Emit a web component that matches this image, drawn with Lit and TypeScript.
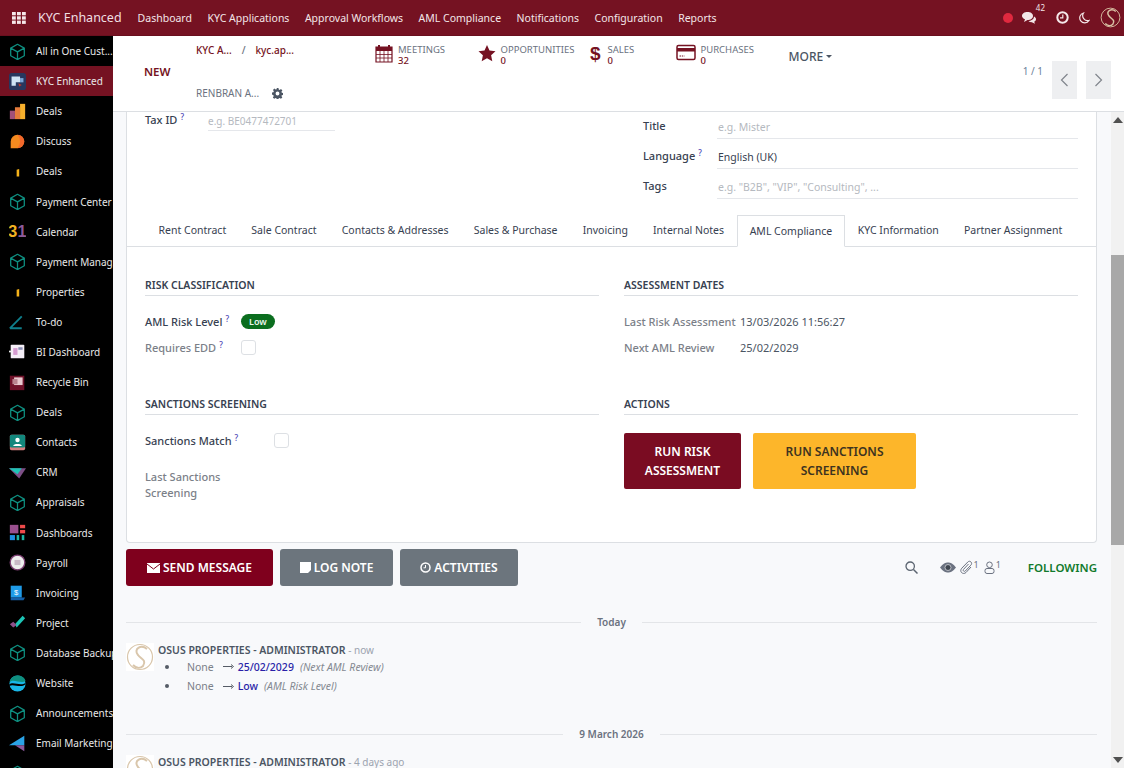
import { LitElement, html, css, svg } from "lit";
import { customElement } from "lit/decorators.js";

const cube = svg`<path d="M10 1.5 18 6v9l-8 4.5L2 15V6z M2 6l8 4.5L18 6 M10 10.5v9" fill="none" stroke="#0e8f80" stroke-width="1.5" stroke-linejoin="round"/>`;

const sideIcons: Record<string, unknown> = {
  cube,
  kyc: svg`<rect x="0" y="0" width="20" height="20" rx="3" fill="#27375e"/><path d="M3 4h10v7h-5v4H3z" fill="#cfe3f4"/><path d="M13 6h4v5h-4z" fill="#7aa7d8"/><path d="M11 12l4 2-3 2z" fill="#c0392b"/>`,
  deals: svg`<rect x="1" y="9" width="6" height="10" fill="#a24f7a"/><rect x="7" y="5" width="6" height="14" fill="#e57b3b"/><rect x="13" y="1" width="6" height="18" fill="#f7b02c"/>`,
  discuss: svg`<path d="M10 2a8 8 0 1 1 0 16H2v-8a8 8 0 0 1 8-8z" fill="#f58a1f"/><path d="M10 2a8 8 0 0 1 8 8 8 8 0 0 1-8 8 12 12 0 0 0 0-16z" fill="#f15a30" opacity=".7"/>`,
  pin: svg`<path d="M9 8l3-1v9H9z" fill="#f5b21a"/>`,
  cal: svg`<text x="-1" y="17" font-family="Liberation Sans, sans-serif" font-size="19" font-weight="700" fill="#f0b323">3</text><text x="10" y="17" font-family="Liberation Sans, sans-serif" font-size="19" font-weight="700" fill="#8e5a9a">1</text>`,
  todo: svg`<path d="M1 18 15 4M1 18h14" fill="none" stroke="#0f7f8c" stroke-width="2.2"/>`,
  bi: svg`<rect x="2" y="2" width="16" height="16" rx="1" fill="#f4eef6"/><rect x="5" y="6" width="5" height="8" fill="#d59bd0"/><rect x="11" y="5" width="5" height="3" fill="#8a8fb5"/><rect x="0" y="9" width="3" height="2" fill="#eee"/>`,
  bin: svg`<rect x="1" y="2" width="17" height="17" fill="#6f1129"/><rect x="6" y="4" width="10" height="9" fill="#e9c9cf"/><rect x="4" y="6" width="6" height="6" fill="#b9838f"/>`,
  contacts: svg`<rect x="1" y="1" width="18" height="18" rx="2" fill="#d47f7f"/><rect x="1" y="1" width="18" height="15" rx="2" fill="#12877c"/><circle cx="10" cy="7" r="2.6" fill="#fff"/><path d="M5 14c0-3 10-3 10 0z" fill="#fff"/>`,
  crm: svg`<path d="M0 5h20l-8 12z" fill="#7d4f86"/><path d="M0 5h15l-5 7z" fill="#1cc4b5"/>`,
  dash: svg`<rect x="1" y="1" width="10" height="10" fill="#99508e"/><rect x="13" y="1" width="6" height="4" fill="#ee4a4a"/><rect x="13" y="7" width="6" height="4" fill="#ee4a4a"/><rect x="1" y="13" width="6" height="6" fill="#1e8fe0"/><rect x="9" y="13" width="3" height="6" fill="#1cb5a3"/><rect x="15" y="13" width="3" height="6" fill="#1cb5a3"/>`,
  payroll: svg`<circle cx="10" cy="10" r="8.6" fill="#eee" stroke="#7c3f72" stroke-width="1.6"/><rect x="6.5" y="7" width="7" height="6" fill="#c9b9c6"/>`,
  inv: svg`<path d="M2 2h13v14H2z" fill="#1f9be8"/><path d="M2 16h17l-2 3H2z" fill="#155fa8"/><text x="6" y="13" font-family="Liberation Sans, sans-serif" font-size="9" fill="#fff">$</text>`,
  proj: svg`<path d="M7 12l9-10 3 3-10 11z" fill="#1cc4b5"/><path d="M1 12l4-3 4 4-4 3z" fill="#8e4f8a"/>`,
  web: svg`<circle cx="10" cy="10" r="9.5" fill="#19b7e8"/><path d="M.5 9C4 3 14 11 19.5 7 18 2 14 .5 10 .5 5 .5 1.500 4 .5 9z" fill="#0f8f7f"/><path d="M.5 11C5 7 14 14 19.500 9v2C14 16 5 10 .5 13z" fill="#000"/>`,
  mail: svg`<path d="M0 12 18 1v11z" fill="#2aa3e6"/><path d="M7 12h11v7z" fill="#8a5a9a"/>`,
};

const apps = [
  ["All in One Cust...", "cube"],
  ["KYC Enhanced", "kyc"],
  ["Deals", "deals"],
  ["Discuss", "discuss"],
  ["Deals", "pin"],
  ["Payment Center", "cube"],
  ["Calendar", "cal"],
  ["Payment Manag...", "cube"],
  ["Properties", "pin"],
  ["To-do", "todo"],
  ["BI Dashboard", "bi"],
  ["Recycle Bin", "bin"],
  ["Deals", "cube"],
  ["Contacts", "contacts"],
  ["CRM", "crm"],
  ["Appraisals", "cube"],
  ["Dashboards", "dash"],
  ["Payroll", "payroll"],
  ["Invoicing", "inv"],
  ["Project", "proj"],
  ["Database Backup", "cube"],
  ["Website", "web"],
  ["Announcements", "cube"],
  ["Email Marketing", "mail"],
  ["Employees", "cube"],
];

const menu = ["Dashboard", "KYC Applications", "Approval Workflows", "AML Compliance", "Notifications", "Configuration", "Reports"];
const tabs = ["Rent Contract", "Sale Contract", "Contacts & Addresses", "Sales & Purchase", "Invoicing", "Internal Notes", "AML Compliance", "KYC Information", "Partner Assignment"];

const logo = (size: number, bg: string, fg: string) => html`<svg width=${size} height=${size} viewBox="0 0 28 28">
  <rect width="28" height="28" fill=${bg} rx=${bg === "#fff" ? 0 : 14} />
  <circle cx="14" cy="14" r="12.5" fill="none" stroke=${fg} stroke-width="1.2" />
  <path d="M21 6C15 1 7 6 12 12c3 4 9 5 5 11-3 3-7 2-10-1" fill="none" stroke=${fg} stroke-width="2" />
</svg>`;

@customElement("app-root")
export class AppRoot extends LitElement {
  static styles = css`
    :host {
      display: block;
      width: 1124px;
      height: 768px;
      overflow: hidden;
      font-family: "Noto Sans", "Open Sans", sans-serif;
      font-size: 11px;
      color: #374151;
    }
    .top {
      height: 36px;
      background: #751222;
      color: #f3e6e8;
      display: flex;
      align-items: center;
      box-sizing: border-box;
      border-bottom: 1px solid #6a0f1e;
    }
    .apps {
      margin: 0 12px 0 12px;
      display: flex;
    }
    .brand {
      font-size: 12.5px;
      margin-right: 16px;
      color: #f0dfe2;
    }
    .menu {
      display: flex;
      gap: 15.5px;
      font-size: 10.5px;
      flex: 1;
    }
    .sys {
      display: flex;
      align-items: center;
      margin-right: 3px;
    }
    .dot {
      width: 10px;
      height: 10px;
      border-radius: 50%;
      background: #e0293f;
      margin-right: 9px;
    }
    .count {
      font-size: 8px;
      align-self: flex-start;
      margin: -5px 11px 0 0;
    }
    .body {
      display: flex;
      height: 732px;
    }
    .side {
      width: 113px;
      flex: none;
      background: #000;
      color: #e8e8e8;
      font-size: 10px;
      overflow: hidden;
    }
    .app {
      height: 30.1px;
      display: flex;
      align-items: center;
      gap: 10px;
      padding-left: 9px;
      white-space: nowrap;
      box-sizing: border-box;
    }
    .app.on {
      background: #751222;
    }
    .app svg {
      flex: none;
    }
    .main {
      flex: 1;
      min-width: 0;
      display: flex;
      flex-direction: column;
      background: #f8f9fb;
    }
    .cp {
      height: 76px;
      flex: none;
      box-sizing: border-box;
      background: #fff;
      border-bottom: 1px solid #dcdfe3;
      display: flex;
    }
    .new {
      margin: 28px 0 0 31px;
      width: 52px;
      font-size: 11.5px;
      font-weight: 600;
      color: #751222;
    }
    .crumbs {
      width: 179px;
      flex: none;
      display: flex;
      flex-direction: column;
      justify-content: space-between;
      padding: 7px 0 11px;
      box-sizing: border-box;
      font-size: 10px;
    }
    .crumb-top {
      color: #751222;
      font-weight: 500;
      display: flex;
      gap: 10px;
    }
    .crumb-sep {
      color: #6b7280;
    }
    .crumb-rec {
      color: #6b7280;
      display: flex;
      align-items: center;
      gap: 13px;
    }
    .stats {
      display: flex;
      align-items: flex-start;
      padding-top: 8px;
      flex: 1;
    }
    .stat {
      display: flex;
      gap: 5px;
      line-height: 11px;
      color: #6b7280;
      font-size: 9.5px;
    }
    .stat b {
      display: block;
      color: #751222;
      font-weight: 500;
    }
    .more {
      font-size: 12px;
      font-weight: 500;
      color: #4b5563;
      margin-top: 4px;
      display: flex;
      align-items: center;
      gap: 3px;
    }
    .caret {
      border: 3px solid transparent;
      border-top-color: #4b5563;
      border-bottom: 0;
    }
    .pager {
      display: flex;
      align-items: flex-start;
      margin: 25px 13px 0 0;
      gap: 9px;
      color: #6b8199;
      font-size: 10px;
      padding-top: 0;
    }
    .pager span {
      margin-top: 3px;
    }
    .pg {
      display: flex;
      gap: 9px;
    }
    .pg div {
      width: 25px;
      height: 38px;
      background: #eeeff1;
      display: flex;
      align-items: center;
      justify-content: center;
    }
    .scroll {
      flex: 1;
      min-height: 0;
      display: flex;
    }
    .content {
      flex: 1;
      min-width: 0;
      overflow: hidden;
      padding: 0 14px 0 13px;
    }
    .bar {
      width: 13px;
      flex: none;
      background: #f1f1f1;
      display: flex;
      flex-direction: column;
      align-items: center;
      justify-content: space-between;
      position: relative;
      padding: 5px 0;
      box-sizing: border-box;
    }
    .thumb {
      position: absolute;
      left: 0;
      width: 13px;
      top: 143px;
      height: 290px;
      background: #a8a8a8;
    }
    .tri {
      border: 5px solid transparent;
      border-bottom: 6px solid #505050;
      border-top: 0;
    }
    .tri.dn {
      border-bottom: 0;
      border-top: 6px solid #505050;
    }
    .sheet {
      background: #fff;
      border: 1px solid #dcdfe3;
      border-top: 0;
      border-radius: 0 0 4px 4px;
      height: 431px;
      box-sizing: border-box;
    }
    .head {
      display: grid;
      grid-template-columns: 498px 1fr;
      height: 100px;
      padding-left: 18px;
    }
    .hl {
      display: flex;
      padding-top: 0;
      height: 18px;
    }
    .hl .lbl {
      font-weight: 500;
      color: #374151;
      width: 63px;
    }
    .ph {
      color: #b5b9c0;
      font-size: 10px;
    }
    .taxin {
      width: 127px;
      border-bottom: 1px solid #e5e7eb;
      height: 17px;
      line-height: 16px;
      margin-top: 1px;
    }
    q,
    sup {
      font-size: 8px;
      color: #4a3fb5;
      quotes: none;
      vertical-align: 4px;
      line-height: 0;
      margin-left: 3px;
    }
    .hr {
      padding-top: 5px;
      padding-right: 18px;
    }
    .hrow {
      display: flex;
      height: 30px;
      box-sizing: border-box;
      align-items: flex-start;
    }
    .hrow .lbl {
      width: 74px;
      font-weight: 500;
      color: #374151;
      padding-top: 1px;
    }
    .hrow .in {
      flex: 1;
      height: 21px;
      line-height: 20px;
      padding-left: 1px;
      border-bottom: 1px solid #e5e7eb;
      font-size: 10.5px;
    }
    .tabs {
      display: flex;
      height: 32px;
      border-bottom: 1px solid #dcdfe3;
      padding-left: 19px;
      box-sizing: border-box;
      margin-top: 3px;
    }
    .tab {
      padding: 0 12.6px;
      line-height: 31px;
      font-size: 10.5px;
      white-space: nowrap;
      color: #374151;
      box-sizing: border-box;
      height: 32px;
    }
    .tab.on {
      background: #fff;
      border: 1px solid #dcdfe3;
      border-bottom-color: #fff;
      line-height: 30px;
      padding: 0 12px;
    }
    .grid {
      display: grid;
      grid-template-columns: 454px 454px;
      column-gap: 25px;
      padding: 31px 18px 0;
    }
    h3 {
      margin: 0;
      font-size: 10.5px;
      font-weight: 600;
      color: #374151;
      line-height: 15px;
      padding-bottom: 1px;
      border-bottom: 1px solid #dcdfe3;
      height: 16px;
    }
    .block {
      height: 119px;
    }
    .f {
      display: flex;
      align-items: center;
      height: 26px;
      font-weight: 500;
      color: #374151;
    }
    .f.mute {
      color: #7b8088;
    }
    .f .lbl {
      width: 96px;
      flex: none;
    }
    .fields {
      padding-top: 12px;
    }
    .badge {
      background: #0b6e1f;
      color: #eaf5ec;
      font-size: 9px;
      font-weight: 600;
      border-radius: 8px;
      height: 15px;
      line-height: 15px;
      padding: 0 8px;
    }
    .cb {
      width: 15px;
      height: 15px;
      border: 1px solid #dde0e4;
      border-radius: 3px;
      box-sizing: border-box;
    }
    .val {
      color: #4b5563;
      font-weight: 400;
    }
    .acts {
      display: flex;
      gap: 12px;
      padding-top: 18px;
    }
    .btn {
      font-size: 12px;
      font-weight: 600;
      text-align: center;
      line-height: 19px;
      height: 56px;
      display: flex;
      align-items: center;
      justify-content: center;
      border-radius: 2px;
      box-sizing: border-box;
    }
    .btn.risk {
      width: 117px;
      background: #7a0c22;
      color: #fff;
    }
    .btn.scr {
      width: 163px;
      background: #fdb62a;
      color: #3d3320;
    }
    .chatbar {
      display: flex;
      align-items: center;
      height: 37px;
      margin-top: 6px;
      gap: 7px;
    }
    .cbtn {
      height: 37px;
      border-radius: 3px;
      display: flex;
      align-items: center;
      justify-content: center;
      gap: 3px;
      font-size: 12px;
      font-weight: 600;
      color: #fff;
      box-sizing: border-box;
      background: #6c757d;
    }
    .cbtn.send {
      width: 147px;
      background: #7f001d;
    }
    .cbtn.log {
      width: 113px;
    }
    .cbtn.act {
      width: 118px;
    }
    .tools {
      margin-left: auto;
      display: flex;
      align-items: center;
      color: #6b7280;
      font-size: 9px;
    }
    .follow {
      font-size: 11.5px;
      font-weight: 600;
      color: #117a2c;
      margin-left: 24px;
    }
    .tools i {
      font-style: normal;
      align-self: flex-start;
      margin: -2px 3px 0 1px;
    }
    .day {
      display: flex;
      align-items: center;
      gap: 16px;
      font-size: 10px;
      font-weight: 600;
      color: #6b7280;
    }
    .day::before,
    .day::after {
      content: "";
      flex: 1;
      height: 1px;
      background: #e3e5e8;
    }
    .msg {
      display: flex;
      gap: 4px;
    }
    .msg .av {
      flex: none;
      width: 28px;
      height: 28px;
      background: #fff;
    }
    .who {
      font-size: 10.5px;
      font-weight: 600;
      color: #4b5563;
      line-height: 14px;
      white-space: nowrap;
    }
    .who small {
      font-weight: 400;
      font-size: 10px;
      color: #9ca3af;
    }
    ul {
      margin: 0;
      padding: 0;
      list-style: none;
    }
    li {
      display: flex;
      align-items: center;
      height: 19.5px;
      font-size: 10.5px;
      color: #7b8088;
    }
    li::before {
      content: "";
      width: 4px;
      height: 4px;
      border-radius: 50%;
      background: #555c66;
      margin: 0 18px 0 7px;
    }
    li .to {
      color: #2a1fa8;
      font-weight: 500;
      margin: 0 6px 0 4px;
    }
    li em {
      color: #858a92;
    }
    .arrow {
      margin-left: 9px;
    }
  `;

  render() {
    return html`
      <div class="top">
        <div class="apps">
          <svg width="14" height="12" viewBox="0 0 14 12" fill="#f6e8ea">
            ${[0, 5, 10].flatMap((x) => [0, 4.3, 8.6].map((y) => svg`<rect x=${x} y=${y} width="3.8" height="3.3" />`))}
          </svg>
        </div>
        <div class="brand">KYC Enhanced</div>
        <div class="menu">${menu.map((m) => html`<span>${m}</span>`)}</div>
        <div class="sys">
          <div class="dot"></div>
          <svg width="14" height="12" viewBox="0 0 14 12" fill="#f3e6e8"><path d="M5.500 0C8.500 0 11 1.500 11 4S8.500 8 5.500 8L2 10l1-2.700C1.200 6.500 0 5.400 0 4 0 1.500 2.500 0 5.500 0z" /><path d="M12 4.500c1.300.7 2 1.500 2 2.700 0 1-.7 2-1.800 2.500l.8 2-3.200-1.500c-1.400 0-2.500-.3-3.300-1C10 8.500 12 7 12 4.500z" /></svg>
          <span class="count">42</span>
          <svg width="13" height="13" viewBox="0 0 13 13" style="margin-right:10px"><circle cx="6.500" cy="6.500" r="5.200" fill="none" stroke="#f6e8ea" stroke-width="2" /><path d="M6.800 3.500v3.300H4" fill="none" stroke="#f6e8ea" stroke-width="1.200" /></svg>
          <svg width="11" height="12" viewBox="0 0 11 12" style="margin-right:10px"><path d="M4.500 1A5 5 0 1 0 10 8.500 5 5 0 0 1 4.500 1z" fill="none" stroke="#f3e6e8" stroke-width="1.200" /></svg>
          ${logo(21, "#751222", "#d9c3a5")}
        </div>
      </div>
      <div class="body">
        <nav class="side">
          ${apps.map(
            ([n, i], idx) => html`<div class="app ${idx === 1 ? "on" : ""}">
              <svg width="17" height="17" viewBox="0 0 20 20">${sideIcons[i]}</svg><span>${n}</span>
            </div>`
          )}
        </nav>
        <div class="main">
          <div class="cp">
            <div class="new">NEW</div>
            <div class="crumbs">
              <div class="crumb-top"><span>KYC A...</span><span class="crumb-sep">/</span><span>kyc.ap...</span></div>
              <div class="crumb-rec">
                <span>RENBRAN A...</span>
                <svg width="11" height="11" viewBox="0 0 16 16" fill="#4b5563"><path d="M9.400 0l.4 2.300 1.300.6 2-1.300 2 2-1.400 1.900.6 1.400 2.300.4v2.800l-2.300.4-.6 1.300 1.300 2-2 2-1.900-1.400-1.400.6-.4 2.300H6.900l-.4-2.300-1.300-.6-2 1.300-2-2 1.400-1.900-.6-1.400L-.200 9.400V6.600l2.300-.4.6-1.300-1.300-2 2-2 1.900 1.400 1.400-.6.400-2.300z M8 5.200a2.800 2.800 0 1 0 0 5.600 2.800 2.800 0 0 0 0-5.600z" fill-rule="evenodd" /></svg>
              </div>
            </div>
            <div class="stats">
              <div class="stat" style="width:102.500px">
                <svg width="18" height="19" viewBox="0 0 18 19"><path d="M1 3h16v15H1z" fill="none" stroke="#751222" stroke-width="1.200" /><path d="M1 3h16v4H1z" fill="#751222" /><path d="M4 1v3M14 1v3" stroke="#751222" stroke-width="2" /><path d="M1 10.500h16M1 14h16M5 7v11M9 7v11M13 7v11" stroke="#751222" stroke-width=".8" /></svg>
                <div>MEETINGS<b>32</b></div>
              </div>
              <div class="stat" style="width:111px">
                <svg width="18" height="18" viewBox="0 0 18 18" fill="#751222"><path d="M9 1l2.500 5.500 6 .7-4.400 4 1.200 6L9 14.200l-5.300 3 1.200-6-4.400-4 6-.7z" /></svg>
                <div>OPPORTUNITIES<b>0</b></div>
              </div>
              <div class="stat" style="width:87px">
                <svg width="14" height="19" viewBox="0 0 14 19"><text x="1" y="16" font-family="Liberation Sans, sans-serif" font-size="19" font-weight="700" fill="#751222">$</text></svg>
                <div>SALES<b>0</b></div>
              </div>
              <div class="stat" style="width:113px">
                <svg width="20" height="17" viewBox="0 0 20 17"><rect x="1" y="1.500" width="18" height="14" rx="1.500" fill="none" stroke="#751222" stroke-width="1.500" /><rect x="1" y="4" width="18" height="3.500" fill="#751222" /><path d="M3.500 12h5" stroke="#751222" stroke-width="1" stroke-dasharray="1.500 .8" /></svg>
                <div>PURCHASES<b>0</b></div>
              </div>
              <div class="more">MORE <span class="caret"></span></div>
            </div>
            <div class="pager">
              <span>1 / 1</span>
              <div class="pg">
                <div><svg width="9" height="14" viewBox="0 0 9 14"><path d="M7.500 1 1.500 7l6 6" fill="none" stroke="#80858c" stroke-width="1.200" /></svg></div>
                <div><svg width="9" height="14" viewBox="0 0 9 14"><path d="M1.500 1l6 6-6 6" fill="none" stroke="#80858c" stroke-width="1.200" /></svg></div>
              </div>
            </div>
          </div>
          <div class="scroll">
            <div class="content">
              <div class="sheet">
                <div class="head">
                  <div class="hl">
                    <div class="lbl">Tax ID<sup>?</sup></div>
                    <div class="ph taxin">e.g. BE0477472701</div>
                  </div>
                  <div class="hr">
                    <div class="hrow"><div class="lbl">Title</div><div class="in ph">e.g. Mister</div></div>
                    <div class="hrow"><div class="lbl">Language<sup>?</sup></div><div class="in">English (UK)</div></div>
                    <div class="hrow"><div class="lbl">Tags</div><div class="in ph">e.g. "B2B", "VIP", "Consulting", ...</div></div>
                  </div>
                </div>
                <div class="tabs">
                  ${tabs.map((t) => html`<div class="tab ${t === "AML Compliance" ? "on" : ""}">${t}</div>`)}
                </div>
                <div class="grid">
                  <div class="block">
                    <h3>RISK CLASSIFICATION</h3>
                    <div class="fields">
                      <div class="f"><div class="lbl">AML Risk Level<sup>?</sup></div><span class="badge">Low</span></div>
                      <div class="f mute"><div class="lbl">Requires EDD<sup>?</sup></div><div class="cb"></div></div>
                    </div>
                  </div>
                  <div class="block">
                    <h3>ASSESSMENT DATES</h3>
                    <div class="fields">
                      <div class="f mute"><div class="lbl" style="width:116px">Last Risk Assessment</div><span class="val">13/03/2026 11:56:27</span></div>
                      <div class="f mute"><div class="lbl" style="width:116px">Next AML Review</div><span class="val">25/02/2029</span></div>
                    </div>
                  </div>
                  <div>
                    <h3>SANCTIONS SCREENING</h3>
                    <div class="fields">
                      <div class="f"><div class="lbl" style="width:129px">Sanctions Match<sup>?</sup></div><div class="cb"></div></div>
                      <div class="f mute" style="height:auto;line-height:16px;margin-top:16px"><div class="lbl">Last Sanctions Screening</div></div>
                    </div>
                  </div>
                  <div>
                    <h3>ACTIONS</h3>
                    <div class="acts">
                      <div class="btn risk">RUN RISK<br />ASSESSMENT</div>
                      <div class="btn scr">RUN SANCTIONS<br />SCREENING</div>
                    </div>
                  </div>
                </div>
              </div>
              <div class="chatbar">
                <div class="cbtn send">
                  <svg width="13" height="10" viewBox="0 0 13 10"><path d="M0 0h13v10H0z" fill="#fff" /><path d="M0 1l6.500 5L13 1" fill="none" stroke="#7f001d" stroke-width="1" /></svg>SEND MESSAGE
                </div>
                <div class="cbtn log">
                  <svg width="11" height="11" viewBox="0 0 11 11"><path d="M0 0h11v8L8 11H0z" fill="#fff" /></svg>LOG NOTE
                </div>
                <div class="cbtn act">
                  <svg width="11" height="11" viewBox="0 0 11 11"><circle cx="5.500" cy="5.500" r="4.500" fill="none" stroke="#fff" stroke-width="1.500" /><path d="M5.500 3v2.800H3.500" fill="none" stroke="#fff" /></svg>ACTIVITIES
                </div>
                <div class="tools">
                  <svg width="13" height="13" viewBox="0 0 13 13" style="margin-right:22px"><circle cx="5.200" cy="5.200" r="4.200" fill="none" stroke="#5b6470" stroke-width="1.300" /><path d="M8.500 8.500 12.500 12.500" stroke="#5b6470" stroke-width="1.500" /></svg>
                  <svg width="16" height="11" viewBox="0 0 16 11" style="margin-right:4px"><path d="M0 5.500C3 1.500 5.500.5 8 .5s5 1 8 5c-3 4-5.500 5-8 5s-5-1-8-5z" fill="#6b7280" /><circle cx="8" cy="5.500" r="3" fill="#3f4650" stroke="#e5e7eb" stroke-width=".7" /></svg>
                  <svg width="13" height="15" viewBox="0 0 13 15"><path d="M11 7 6 12.500c-1.500 1.500-3.500 1-4.500 0s-1-3 .3-4.300L7.800 2c1-1 2.300-1 3.200 0s.8 2.200-.2 3.200L5.300 11c-.6.600-1.300.5-1.800 0s-.4-1.200.2-1.800L8.500 4" fill="none" stroke="#6b7280" stroke-width="1" /></svg>
                  <i>1</i>
                  <svg width="11" height="13" viewBox="0 0 11 13" style="margin-left:2px"><circle cx="5.500" cy="3.800" r="2.800" fill="none" stroke="#6b7280" /><rect x="1" y="7.500" width="9" height="5" rx="2" fill="none" stroke="#6b7280" /></svg>
                  <i>1</i>
                  <span class="follow">FOLLOWING</span>
                </div>
              </div>
              <div class="day" style="margin-top:29px">Today</div>
              <div class="msg" style="margin-top:14px">
                <div class="av">${logo(28, "#fff", "#d9c6ab")}</div>
                <div>
                  <div class="who">OSUS PROPERTIES - ADMINISTRATOR <small>- now</small></div>
                  <ul>
                    <li>None<svg class="arrow" width="11" height="5" viewBox="0 0 11 5"><path d="M0 2.500h9M8 .5l2.500 2-2.500 2" fill="none" stroke="#555c66" /></svg><span class="to">25/02/2029</span><em>(Next AML Review)</em></li>
                    <li>None<svg class="arrow" width="11" height="5" viewBox="0 0 11 5"><path d="M0 2.500h9M8 .5l2.500 2-2.500 2" fill="none" stroke="#555c66" /></svg><span class="to">Low</span><em>(AML Risk Level)</em></li>
                  </ul>
                </div>
              </div>
              <div class="day" style="margin-top:31px">9 March 2026</div>
              <div class="msg" style="margin-top:14px">
                <div class="av">${logo(28, "#fff", "#d9c6ab")}</div>
                <div class="who">OSUS PROPERTIES - ADMINISTRATOR <small>- 4 days ago</small></div>
              </div>
            </div>
            <div class="bar">
              <div class="thumb"></div>
              <div class="tri"></div>
              <div class="tri dn"></div>
            </div>
          </div>
        </div>
      </div>
    `;
  }
}
